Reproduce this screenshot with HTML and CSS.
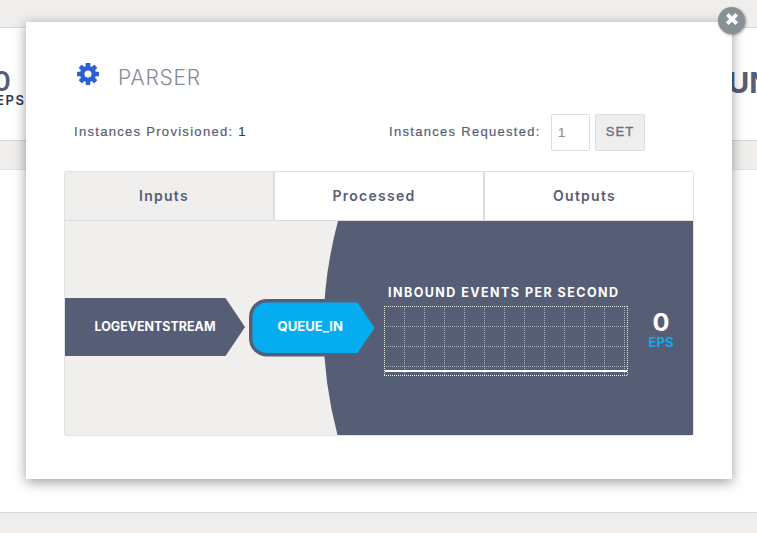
FILE: index.html
```html
<!DOCTYPE html>
<html lang="en">
<head>
<meta charset="utf-8">
<title>Parser</title>
<link rel="stylesheet" href="styles.css">
</head>
<body>
<div class="page">
  <div class="band band-top"></div>
  <div class="summary">
    <div class="rate"><span class="rate-value">0</span><span class="rate-unit">EPS</span></div>
    <div class="status">UN</div>
  </div>
  <div class="band band-middle"></div>
  <div class="canvas"></div>
  <div class="band band-bottom"></div>
</div>
<section class="modal">
  <button class="close" aria-label="Close">
    <svg width="14" height="14" viewBox="0 0 14 14"><path d="M2.300 2.300 11.700 11.700M11.700 2.300 2.300 11.700" stroke="#fff" stroke-width="3.800"/></svg>
  </button>
  <header class="heading">
    <svg class="gear" width="22" height="22" viewBox="-11 -11 22 22">
      <g fill="#2b5fd6">
        <circle r="8"/>
        <rect x="-2.3" y="-11" width="4.6" height="22" rx=".6"/>
        <rect x="-2.3" y="-11" width="4.6" height="22" rx=".6" transform="rotate(45)"/>
        <rect x="-2.3" y="-11" width="4.6" height="22" rx=".6" transform="rotate(90)"/>
        <rect x="-2.3" y="-11" width="4.6" height="22" rx=".6" transform="rotate(135)"/>
      </g>
      <circle r="3.5" fill="#fff"/>
    </svg>
    <h1>PARSER</h1>
  </header>
  <div class="instances">
    <span class="provisioned">Instances Provisioned: <span class="count">1</span></span>
    <span class="requested">Instances Requested:</span>
    <input class="amount" value="1" aria-label="Instances requested">
    <button class="set">SET</button>
  </div>
  <div class="panel">
    <nav class="tabs">
      <div class="tab active">Inputs</div>
      <div class="tab">Processed</div>
      <div class="tab">Outputs</div>
    </nav>
    <svg class="flow" width="628" height="214" viewBox="65 221 628 214">
      <path d="M338 221A416 416 0 0 0 337.500 435H693V221Z" fill="#565e76"/>
      <path d="M65 298H225.500L245 327 225.500 356H65Z" fill="#565e76"/>
      <path d="M340 299H267A18 18 0 0 0 249 317V338.500A18 18 0 0 0 267 356.500H340Z" fill="#565e76"/>
      <path d="M357.500 302.500H267A14.500 14.500 0 0 0 252.500 317V338.500A14.500 14.500 0 0 0 267 353H357.500L374.500 328Z" fill="#05adf0"/>
      <g fill="#fff" class="caps">
        <text x="94.500" y="331" font-size="12.500" textLength="121" lengthAdjust="spacingAndGlyphs">LOGEVENTSTREAM</text>
        <text x="277.500" y="331" font-size="12.500" textLength="65.500" lengthAdjust="spacingAndGlyphs">QUEUE_IN</text>
        <text x="388" y="297" font-size="12.500" textLength="230">INBOUND EVENTS PER SECOND</text>
        <text x="652.500" y="331" font-size="24.500" textLength="17" lengthAdjust="spacingAndGlyphs">0</text>
        <text x="648.500" y="347" font-size="12.500" textLength="25" lengthAdjust="spacingAndGlyphs" class="eps">EPS</text>
      </g>
      <g fill="none" stroke="#fff" stroke-dasharray="1 1">
        <path opacity=".5" d="M404.500 306V375M424.500 306V375M444.500 306V375M464.500 306V375M484.500 306V375M504.500 306V375M524.500 306V375M544.500 306V375M564.500 306V375M584.500 306V375M604.500 306V375M624.500 306V375M384 326.500H628M384 346.500H628M384 366.500H628"/>
        <path opacity=".85" d="M384 306.500H628M384 375.500H628M384.500 306V376M627.500 306V376"/>
      </g>
      <path d="M385 371H627" stroke="#fff" stroke-width="2.200"/>
    </svg>
  </div>
</section>
</body>
</html>
```
FILE: styles.css
```css
* { box-sizing: border-box; }
body {
  margin: 0;
  width: 757px;
  height: 533px;
  overflow: hidden;
  background: #fff;
  color: #565e76;
  font-family: "Liberation Sans", Arial, sans-serif;
}
.page { height: 533px; display: flex; flex-direction: column; }
.band { background: #efeeec; }
.band-top { height: 28px; border-bottom: 1px solid #d9dada; }
.band-middle { height: 30px; border-top: 1px solid #d4d6d6; border-bottom: 1px solid #e4e4e2; }
.band-bottom { height: 21px; border-top: 1px solid #d9dada; }
.canvas { height: 342px; }
.summary {
  height: 112px;
  display: flex;
  justify-content: space-between;
  font-family: Inter, sans-serif;
  font-weight: 600;
}
.rate { display: flex; flex-direction: column; margin-left: -7px; padding-top: 42px; }
.rate-value { font-size: 27px; line-height: 24px; }
.rate-unit { font-size: 13px; line-height: 13px; letter-spacing: 1.6px; margin-left: 3px; color: #30384f; }
.status { width: 29px; padding-top: 37px; font-size: 29px; line-height: 36px; font-weight: 700; }
.modal {
  position: absolute;
  left: 26px;
  top: 22px;
  width: 706px;
  height: 457px;
  padding: 0 38px;
  background: #fff;
  box-shadow: 0 3px 12px rgba(0, 0, 0, .4);
}
.close {
  position: absolute;
  right: -13px;
  top: -15px;
  width: 27px;
  height: 27px;
  padding: 0 0 3px;
  border: 0;
  border-radius: 50%;
  background: #879093;
  box-shadow: 1px 1px 3px rgba(0, 0, 0, .4);
  display: flex;
  align-items: center;
  justify-content: center;
}
.close svg { flex: none; }
.heading { display: flex; padding: 42px 0 0 13px; height: 86px; }
.gear { flex: none; margin-top: -1px; }
h1 {
  margin: 2px 0 0 19px;
  font: 300 21px/24px Inter, sans-serif;
  letter-spacing: .8px;
  color: #898b96;
}
.instances {
  height: 63px;
  display: flex;
  align-items: flex-start;
  padding: 6px 0 0 10px;
  font-size: 13px;
  line-height: 36px;
  letter-spacing: 1.300px;
  white-space: nowrap;
  -webkit-text-stroke: .2px currentColor;
}
.provisioned { width: 315px; }
.count { color: #373f57; }
.requested { width: 162px; }
.amount, .set {
  height: 37px;
  border: 1px solid #dedede;
  border-radius: 2px;
  font: 13px "Liberation Sans", Arial, sans-serif;
}
.amount { width: 39px; padding: 0 6px; margin-right: 5px; color: #8c8c8c; }
.set { width: 50px; padding: 0 0 2px; background: #eee; color: #696f80; letter-spacing: 1px; -webkit-text-stroke: .3px currentColor; }
.panel {
  width: 630px;
  height: 265px;
  border: 1px solid #e2e2e1;
  border-radius: 2px;
  background: #f0efed;
  overflow: hidden;
}
.tabs { display: flex; height: 49px; border-bottom: 1px solid #dcdddc; }
.tab {
  width: 210px;
  border-right: 2px solid #dedede;
  background: #fff;
  font: 600 14px/48px Inter, sans-serif;
  letter-spacing: 1.250px;
  text-align: center;
}
.tab:last-child { width: 208px; border-right: 0; padding-right: 9px; }
.tab.active { background: #f0efed; padding-right: 10px; }
.tab:nth-child(2) { padding-right: 10px; }
.flow { display: block; }
.caps { font-family: Inter, sans-serif; font-weight: 700; }
.eps { fill: #16a6ef; }
```
